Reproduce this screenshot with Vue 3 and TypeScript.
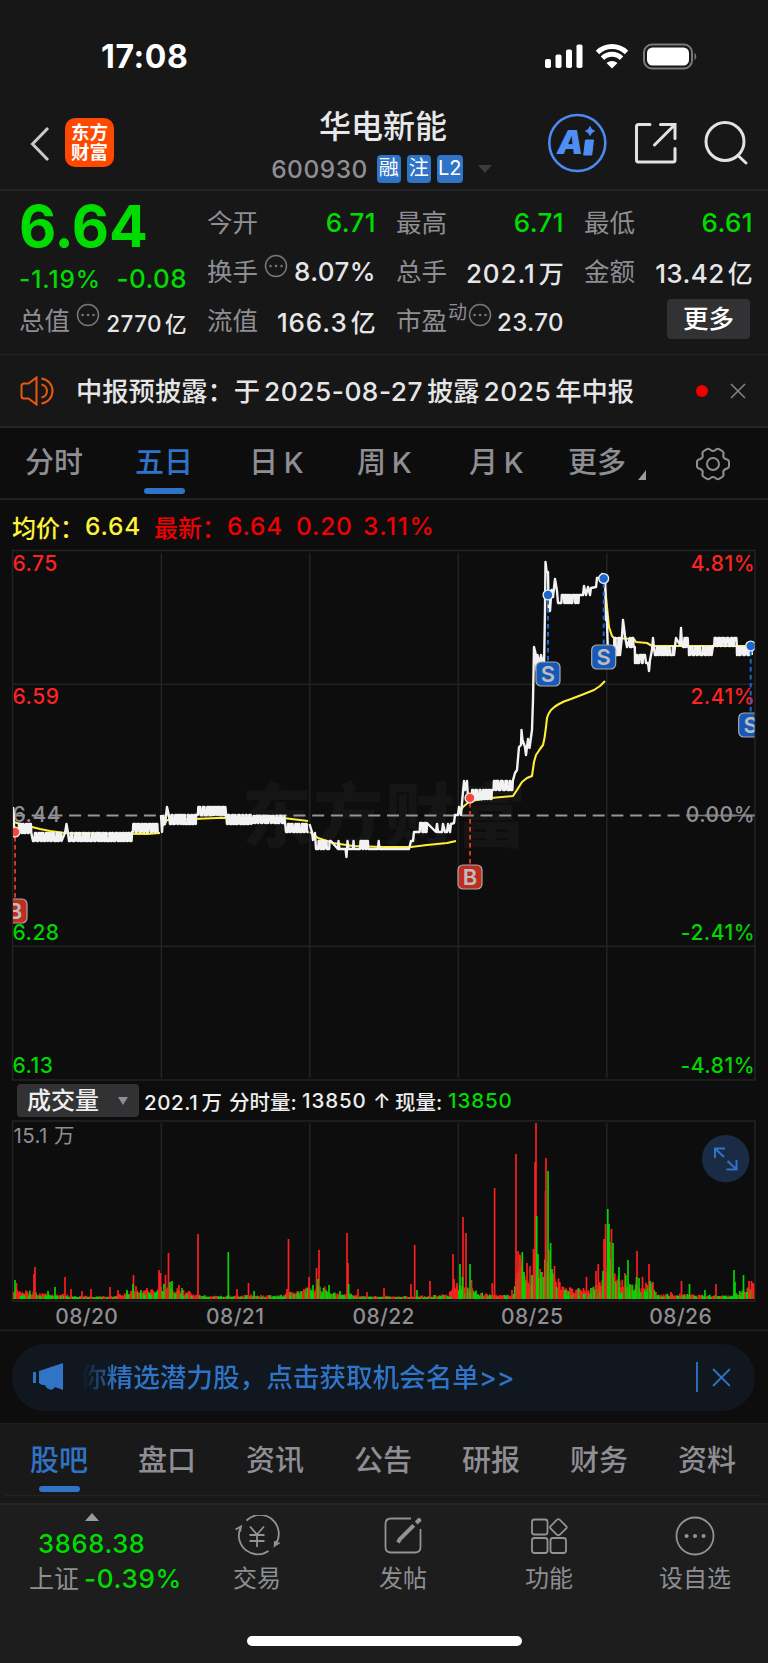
<script setup lang="ts">
interface Peak { x: number; h: number; up: boolean }

const UP = '#fb1f1f'
const DOWN = '#00d600'

const periods = ['分时', '五日', '日 K', '周 K', '月 K', '更多']
const sections = ['股吧', '盘口', '资讯', '公告', '研报', '财务', '资料']
const days = ['08/20', '08/21', '08/22', '08/25', '08/26']
const gridX = [161.3, 309.8, 458.3, 606.8]

let seed = 7
function rnd(): number {
  seed = (seed * 16807) % 2147483647
  return seed / 2147483647
}

/* [x0, x1, high, low, share of time at the low side] */
type Zone = [number, number, number, number, number]
function zigzag([x0, x1, top, bottom, bias]: Zone): string {
  let out = ''
  let x = x0
  let low = true
  while (x < x1) {
    out += ` ${x.toFixed(1)},${low ? bottom : top}`
    x += low ? 0.6 + rnd() * 2.8 * bias : 0.6 + rnd() * 2.8 * (1 - bias)
    if (x < x1) out += ` ${x.toFixed(1)},${low ? bottom : top}`
    x += 0.4
    low = !low
  }
  return out
}

const price = [
  '13,807 14,826 16,834' + zigzag([18, 32, 824, 833, 0.5]) + zigzag([33, 62, 833, 841, 0.6]) +
    ' 65,833 66.5,824 68,833' + zigzag([69, 132, 833, 841, 0.6]) + zigzag([132, 159, 824, 832, 0.5]),
  '161,815 162,832 163,816 165,824 167,807 169,816' + zigzag([170, 196, 815, 824, 0.6]) +
    zigzag([196, 227, 807, 815, 0.5]) + zigzag([227, 252, 815, 824, 0.5]) +
    zigzag([252, 286, 816, 823, 0.5]) + zigzag([286, 309, 824, 832, 0.5]),
  '309.5,824 312,832 313,840 315,833 316,849' + zigzag([317, 331, 841, 849, 0.6]) +
    ' 338,849 338.5,841 339.5,849 345.5,849 346.5,857 347.5,841 348.5,849 353,849 353.5,841 354,849' +
    zigzag([358, 369, 841, 849, 0.6]) + ' 378,849 378.7,841 379.4,849 409,849 411,841 413,841 414,832 417,832' +
    zigzag([418, 427, 823, 832, 0.5]) +
    ' 436,832 437,824 438,832 442,832 443,824 445,832 447,832 448,824 450,832 451,824 454,823 455,815 458,815' +
    ' 459,807 461,815 462,803 464,781 465,790 467,781 468,798' + zigzag([470, 492, 790, 799, 0.6]) +
    zigzag([492, 514, 781, 790, 0.5]) +
    ' 515,773 517,770 519,747 521,745 521.5,730 522.5,740 525,747 526,755 528,739 529.5,748 532,730 533,700 534,647 535.5,653 536.5,670 537.5,655 540,665 541,655 544,668 545,610 545.5,562 546.5,571 548,572 548.7,611 550,611 551.5,590 553,597 555,579 557,591 558,603' +
    zigzag([560, 581, 595, 603, 0.4]) +
    ' 583,595 584,586 586,595 588,587 590,595 591,588 596,587 597,578 600,578 602,574 605,575 606,620 606.7,612 608,655 609.5,648',
  '609,648 612,654' + zigzag([613, 621, 638, 655, 0.5]) +
    ' 622,636 623,620 625,636 627,647 630,638' + zigzag([630, 635, 638, 647, 0.5]) +
    zigzag([635, 644, 655, 663, 0.5]) + ' 645,655 646,663 648,663 649,671 650,660 652,650 653,638 654,648' +
    zigzag([655, 675, 647, 655, 0.7]) + ' 676,638 680,645 681,628 682,645' +
    zigzag([683, 689, 638, 647, 0.4]) + zigzag([689, 713, 647, 655, 0.6]) +
    zigzag([713, 737, 638, 646, 0.4]) + zigzag([737, 752, 647, 655, 0.5]),
]

const average = [
  '13,807 14,822 20,824 32,827 40,829 50,831 65,833 100,833.5 147,834 160,833',
  '163,826 167,820 193,819 217,818 283,818 308,821',
  '310,832 318,838 333,843 353,846 383,847 411,847 427,845 447,843 456,841',
  '459,813 463,807 470,801 491,798 513,796 517,790 522,782 527,778 532,776 534,762 536,755 540,749 543,745 544.5,738 546,727 547,718 548.5,714 551,710 555,706.500 559,704 564,701.500 571,699 584,694 594,690 600,686 605,681',
  '605,587 607,607 609,627 612,636 614,638 634,639 636,642 647,643 652,646 755,646',
]

const trades = [
  { kind: 'B', x: 15, y: 832, tag: 911 }, { kind: 'B', x: 470, y: 798, tag: 877 },
  { kind: 'S', x: 548, y: 595, tag: 674 }, { kind: 'S', x: 603.7, y: 578.5, tag: 657 },
  { kind: 'S', x: 750.7, y: 646, tag: 725 },
]

/* typical volume level along the x axis */
const level: [number, number][] = [
  [13, 10], [30, 8], [50, 5], [60, 5], [80, 3], [115, 3], [130, 8], [160, 12], [175, 11], [195, 5], [210, 3],
  [250, 4], [280, 4], [300, 9], [320, 14], [335, 6], [350, 6], [360, 3], [420, 3], [448, 5], [458, 15],
  [472, 10], [480, 6], [495, 4], [513, 4], [515, 24], [520, 44], [525, 27], [531, 18], [536, 38], [540, 26],
  [546, 44], [552, 26], [560, 18], [572, 10], [590, 10], [600, 20], [606, 44], [612, 36], [620, 21], [628, 14],
  [640, 14], [652, 16], [657, 5], [680, 5], [700, 4], [730, 4], [740, 8], [755, 16],
]
function levelAt(x: number): number {
  for (let i = 1; i < level.length; i++) {
    const [x1, h1] = level[i]
    const [x0, h0] = level[i - 1]
    if (x <= x1) return h0 + ((h1 - h0) * (x - x0)) / (x1 - x0)
  }
  return 5
}

const peaks = ('15:19g 16.5:16r 35:32r 34:25r 48:8g 55:12g 65:22r 71:10r 82:8r 91:10r 110:12r 118:9r 127:9g 133.5:24r 133:15g 136:13r 147:11r ' +
  '159:29r 160.5:26r 164:15g 165.5:24r 168.5:46r 170:17g 172:18g 179:14r 182:11g 189:8r 198:65r 228.3:47g 237:10r 248.5:16r 254:8g 288.5:60r ' +
  '287:10r 304:10r 309:22r 313:14g 316.5:31r 319:49r 318:20g 329:14g 340:8g 347:66r 348:36r 348.6:15g 358:10r 367:7r 384:11r 411:15r ' +
  '414.7:54r 417:9g 430:18r 453:45r 454:20r 457:16r 460:35g 463:82r 462.5:22g 466:66r 470:35g 471.5:19r 492.3:16r 494.6:111r 512:9r ' +
  '516:145r 518:48r 520:43r 522.3:47g 524:27g 527:36r 530:33r 532:24g 533.5:50r 535:137r 536:176r 536.7:83g 538:45g 540:30r 541:27g ' +
  '546:141r 545.5:108r 548:128g 549:49r 550.6:56g 552:30g 554.5:33r 586.5:22r 596:28r 598.3:35r 603:28g 604:60r 605.6:75r 607.8:90g ' +
  '609:75g 609.7:57g 611.5:70r 613:56g 619:32g 625:26r 628:39g 625.8:24g 637:48r 636.5:22g 639:21g 642.5:22r 649:35r 650:18g 653:17r ' +
  '671:7r 681.5:18r 689.5:15g 705:9g 716:15r 734:29g 735:17g 743.5:24g 749:18r 751.5:18r 753:16r')
  .split(' ')
  .map<Peak>((token) => {
    const [x, rest] = token.split(':')
    return { x: Number(x), h: parseFloat(rest), up: rest.endsWith('r') }
  })

const bars: Peak[] = []
for (let x = 13.5; x < 754; x += 1.25) {
  const top = levelAt(x)
  bars.push({ x, h: Math.max(2, top * (0.5 + rnd() * 0.6)), up: rnd() > 0.3 })
}
for (let x = 14; x < 754; x += 1.6) {
  bars.push({ x, h: Math.max(1.5, levelAt(x) * (0.25 + rnd() * 0.5)), up: rnd() > 0.5 })
}
function barPath(up: boolean, list: Peak[]): string {
  return list.filter((b) => b.up === up).map((b) => `M${b.x.toFixed(1)} 1299v-${b.h.toFixed(1)}`).join('')
}
</script>

<template>
  <div class="screen">
    <header class="top">
      <div class="status">
        <span class="clock">17:08</span>
        <svg class="radio" width="160" height="30" viewBox="0 0 160 30">
          <g fill="#fff">
            <rect x="2" y="17" width="6" height="9" rx="1.8" /><rect x="12.5" y="12.500" width="6" height="13.500" rx="1.800" />
            <rect x="23" y="7.500" width="6" height="18.500" rx="1.800" /><rect x="33.500" y="2.500" width="6" height="23.500" rx="1.800" />
            <path d="M69 26.500l-5.500-5.500a8.300 8.300 0 0 1 11 0z" />
          </g>
          <path d="M54.500 10.500a20.800 20.800 0 0 1 29 0M59.500 16.200a13.700 13.700 0 0 1 19 0" fill="none" stroke="#fff" stroke-width="5" />
          <rect x="101" y="2.500" width="48" height="24" rx="8" fill="none" stroke="#7a7a7a" stroke-width="2" />
          <rect x="104" y="5.500" width="42" height="18" rx="5.500" fill="#fff" />
          <path d="M151.500 10.500q3.500 4 0 8z" fill="#7a7a7a" />
        </svg>
      </div>
      <div class="nav">
        <svg class="back" width="22" height="38" viewBox="0 0 22 38"><path d="M19 3L3.500 19L19 35" fill="none" stroke="#c9c9c9" stroke-width="3" /></svg>
        <div class="brand"><span>东方</span><span>财富</span></div>
        <div class="title">
          <h1>华电新能</h1>
          <div class="code"><span>600930</span><b>融</b><b>注</b><b class="lv">L2</b><i></i></div>
        </div>
        <svg class="tools" width="208" height="64" viewBox="0 0 208 64">
          <circle cx="31.300" cy="32" r="28" fill="none" stroke="#4a8af0" stroke-width="2.600" />
          <text x="11" y="42.500" class="ai">A</text>
          <path d="M39.500 29h8l-1.800 15h-8z" fill="#4f8ff5" stroke="#4f8ff5" stroke-linejoin="round" />
          <path d="M44 15.500q1 3.700 4.500 4.500q-3.500 1-4.500 4.500q-1-3.500-4.500-4.500q3.500-.8 4.500-4.500z" fill="#4f8ff5" stroke="#4f8ff5" />
          <g fill="none" stroke="#e2e2e2" stroke-width="3" stroke-linecap="round">
            <path d="M104 13.500H92.500q-2 0-2 2V49q0 2 2 2h34.500q2 0 2-2V37.500M114.500 13.500H129v14M129 13.500L108.500 34" />
            <circle cx="179" cy="30.500" r="19" /><path d="M192 44.500L200 52" />
          </g>
        </svg>
      </div>
    </header>

    <section class="quote">
      <div class="c0">
        <div class="last">6.64</div>
        <div class="change"><span>-1.19%</span><span class="diff">-0.08</span></div>
        <div class="cell"><label>总值</label><svg class="more" viewBox="0 0 24 24"><circle cx="12" cy="12" r="10.500" /><path d="M6.500 12h.1M12 12h.1M17.500 12h.1" /></svg><em class="small">2770<u>亿</u></em></div>
      </div>
      <div class="col">
        <div class="cell"><label>今开</label><em class="down">6.71</em></div>
        <div class="cell"><label>换手</label><svg class="more" viewBox="0 0 24 24"><circle cx="12" cy="12" r="10.500" /><path d="M6.500 12h.1M12 12h.1M17.500 12h.1" /></svg><em>8.07%</em></div>
        <div class="cell"><label>流值</label><em class="wide">166.3<u>亿</u></em></div>
      </div>
      <div class="col">
        <div class="cell"><label>最高</label><em class="down">6.71</em></div>
        <div class="cell"><label>总手</label><em class="wide">202.1<u>万</u></em></div>
        <div class="cell"><label>市盈</label><sup>动</sup><svg class="more tight" viewBox="0 0 24 24"><circle cx="12" cy="12" r="10.500" /><path d="M6.500 12h.1M12 12h.1M17.500 12h.1" /></svg><em class="pe">23.70</em></div>
      </div>
      <div class="col">
        <div class="cell"><label>最低</label><em class="down">6.61</em></div>
        <div class="cell"><label>金额</label><em>13.42<u>亿</u></em></div>
        <div class="cell end"><button>更多</button></div>
      </div>
    </section>

    <section class="notice">
      <svg width="36" height="30" viewBox="0 0 36 30" fill="none" stroke="#e8590c" stroke-width="2">
        <path d="M16.500 1.500v27l-8-6H4q-2.500 0-2.500-2.500V10Q1.500 7.500 4 7.500h4.500zM21.500 2.500a12.600 12.600 0 0 1 0 25M21.500 8.500a6.600 6.600 0 0 1 0 13" />
      </svg>
      <p>中报预披露：于<span class="num">2025-08-27</span>披露<span class="num">2025</span>年中报</p>
      <span class="dot"></span>
      <svg width="16" height="16" viewBox="0 0 16 16"><path d="M1 1l14 14M15 1L1 15" stroke="#858585" stroke-width="1.500" /></svg>
    </section>

    <nav class="periods">
      <span v-for="p in periods" :key="p" :class="{ on: p === '五日' }">{{ p }}</span>
      <svg class="caret" width="8" height="10" viewBox="0 0 8 10"><path d="M8 0v10H0z" fill="#9a9a9f" /></svg>
      <svg class="gear" width="36" height="36" viewBox="0 0 36 36" fill="none" stroke="#8e8e93" stroke-width="2">
        <path d="M11.500 3.300Q14 2 15.500 4q2.500 2 5 0q1.500-2 4-.7l3 1.900q1.800 1.500.8 3.500q-.6 3 2.300 4.300q3.400.8 3.400 2.800v4.400q0 2-3.400 2.800q-2.900 1.300-2.300 4.300q1 2-.8 3.500l-3 1.900q-2.500 1.300-4-.7q-2.500-2-5 0q-1.500 2-4 .7l-3-1.900q-1.800-1.500-.8-3.500q.6-3-2.300-4.300Q2 22.200 2 20.200v-4.400q0-2 3.400-2.800q2.900-1.300 2.300-4.300q-1-2 .8-3.500z" />
        <circle cx="18" cy="18" r="6" />
      </svg>
    </nav>

    <div class="legend"><span class="avg n0">均价：</span><span class="avg n1">6.64</span><span class="n0">最新：</span><span class="n2">6.64</span><span class="n3">0.20</span><span class="n4">3.11%</span></div>

    <svg class="chart" width="768" height="532" viewBox="0 549 768 532">
      <defs><clipPath id="plot"><rect x="13" y="551" width="741.500" height="529" /></clipPath></defs>
      <text x="384" y="842" class="mark" textLength="284">东方财富</text>
      <g stroke="#232325" stroke-width="1.500" fill="none">
        <rect x="12.500" y="550.500" width="742.500" height="529.500" />
        <path d="M12.500 684.300H755M12.500 946.300H755" />
        <path v-for="x in gridX" :key="x" :d="`M${x} 553V1078`" />
      </g>
      <path d="M13 815.500H755" stroke="#96969a" stroke-width="2" stroke-dasharray="12 6.700" />
      <path d="M688 815.500H755" stroke="#77777b" stroke-width="1.500" />
      <g class="axis">
        <text x="12.500" y="571" fill="#f22">6.75</text><text x="12.500" y="703.500" fill="#f22">6.59</text>
        <text x="12.500" y="822" fill="#8e8e93">6.44</text><text x="12.500" y="940" fill="#00d600">6.28</text>
        <text x="12.500" y="1073" fill="#00d600">6.13</text>
        <g text-anchor="end">
          <text x="755" y="571" fill="#f22">4.81%</text><text x="755" y="703.500" fill="#f22">2.41%</text>
          <text x="755" y="822" fill="#8e8e93">0.00%</text><text x="755" y="940" fill="#00d600">-2.41%</text>
          <text x="755" y="1073" fill="#00d600">-4.81%</text>
        </g>
      </g>
      <g clip-path="url(#plot)">
        <polyline v-for="(p, i) in average" :key="'a' + i" :points="p" fill="none" stroke="#ffee35" stroke-width="2.100" stroke-linejoin="round" />
        <polyline v-for="(p, i) in price" :key="'p' + i" :points="p" fill="none" stroke="#f2f2f2" stroke-width="2.400" stroke-linejoin="round" />
        <g v-for="t in trades" :key="t.x" :class="['trade', t.kind]">
          <path :d="`M${t.x} ${t.y + 5}V${t.tag - 12}`" stroke-width="2" stroke-dasharray="4.500 3.500" />
          <circle :cx="t.x" :cy="t.y" r="4.900" />
          <rect :x="t.x - 12" :y="t.tag - 12" width="24" height="24" rx="5" />
          <text :x="t.x" :y="t.tag + 8">{{ t.kind }}</text>
        </g>
      </g>
    </svg>

    <div class="volbar">
      <button>成交量<i></i></button>
      <span>202.1<s></s>万</span><span class="v2">分时量:</span><span class="v3">13850</span><span class="v4">↑</span><span class="v5">现量:</span><span class="v6">13850</span>
    </div>

    <svg class="volume" width="768" height="211" viewBox="0 1120 768 211">
      <g stroke="#232325" stroke-width="1.500" fill="none">
        <rect x="12.500" y="1121" width="742.500" height="180" />
        <path v-for="x in gridX" :key="x" :d="`M${x} 1123V1299`" />
        <path d="M0 1330.300H768" />
      </g>
      <text x="13.500" y="1143" class="max">15.1 万</text>
      <g stroke-width="1.700">
        <path :d="barPath(true, bars)" :stroke="UP" /><path :d="barPath(false, bars)" :stroke="DOWN" />
        <path :d="barPath(true, peaks)" :stroke="UP" /><path :d="barPath(false, peaks)" :stroke="DOWN" />
      </g>
      <text v-for="(d, i) in days" :key="d" :x="86.700 + i * 148.500" y="1323.500" class="day">{{ d }}</text>
      <circle cx="725.700" cy="1158.700" r="23.700" fill="#1a2c45" />
      <path d="M715 1158V1148.500H725M715.500 1149L724 1157M736.500 1160V1169.500H726.500M736 1169L727.500 1161" fill="none" stroke="#2f74c6" stroke-width="2" />
    </svg>

    <div class="bannerbox">
      <div class="banner">
        <svg width="34" height="30" viewBox="0 0 34 30" fill="#2f74c6"><path d="M1 10h3v11H1zM7 9L31 1v27l-8-3q-2 3.500-5 2.500q-4-1-5-4.500H10L7 21z" /></svg>
        <p>你精选潜力股，点击获取机会名单&gt;&gt;</p>
        <svg width="34" height="32" viewBox="0 0 34 32" fill="none" stroke="#2f74c6" stroke-width="1.800"><path d="M1 1V31M17 8l17 17M34 8L17 25" /></svg>
      </div>
    </div>

    <nav class="sections"><span v-for="s in sections" :key="s" :class="{ on: s === '股吧' }">{{ s }}</span></nav>

    <footer class="dock">
      <div class="index">
        <i></i><div class="points">3868.38</div><div class="move"><span>上证</span>-0.39%</div>
      </div>
      <div class="action">
        <svg viewBox="0 0 48 42"><path d="M13.500 5.500A18.900 18.900 0 0 1 42.500 29.500l-.8 1l.2-4.500M41 31l5.500-3.200M35.500 36A18.900 18.900 0 0 1 7 14l.700-2.500M2.500 14.500L8 11.500l-.8 5M17 11.500l7 8l7-8M24 20v12M16.500 20h15M16.500 26h15" /></svg><span>交易</span>
      </div>
      <div class="action">
        <svg viewBox="0 0 48 42"><path d="M32 3.500H12q-5.500 0-5.500 5.500V32q0 5.500 5.500 5.500h24q5.500 0 5.500-5.500V14" /><path d="M34.800 10.300L21 24L19 27.500" stroke-width="4" /><path d="M37.200 8L40 5.200" stroke-width="4" /><path d="M40 5.200v0" stroke-width="4.500" stroke-linecap="round" /></svg><span>发帖</span>
      </div>
      <div class="action">
        <svg viewBox="0 0 48 42"><rect x="7" y="4.500" width="15.500" height="15" rx="2.500" /><rect x="7" y="23" width="15.500" height="15" rx="2.500" /><rect x="25.500" y="23" width="15.500" height="15" rx="2.500" /><path d="M32 4.600q1.300-1 2.600 0l6.700 6.700q1 1 0 2l-6.700 6.500q-1.300 1-2.600 0l-6.500-6.500q-1-1 0-2z" /></svg><span>功能</span>
      </div>
      <div class="action">
        <svg viewBox="0 0 48 42"><circle cx="24" cy="21" r="18.500" /><path d="M15.500 21h.1M24 21h.1M32.500 21h.1" stroke-width="4" stroke-linecap="round" /></svg><span>设自选</span>
      </div>
      <div class="home"></div>
    </footer>
  </div>
</template>

<style>
body { background: #0d0d0d; }
</style>

<style scoped>
.screen, .screen * { box-sizing: border-box; }
.screen { width: 768px; height: 1663px; overflow: hidden; background: #0d0d0d; color: #e6e6e8; font-family: Inter, "Noto Sans CJK SC", sans-serif; display: flex; flex-direction: column; white-space: nowrap; }
.screen > * { flex: none; }
svg { display: block; flex: none; }
.top { height: 191px; background: #171717; border-bottom: 2px solid #242426; }
.status { height: 98px; display: flex; justify-content: space-between; padding: 42px 65px 0 101px; }
.clock { font-weight: 700; font-size: 32px; line-height: 30px; color: #fff; letter-spacing: 0.600px; }
.nav { height: 91px; display: flex; align-items: flex-start; }
.back { margin: 27px 0 0 29px; }
.brand { margin: 20px 0 0 14px; width: 49px; height: 49px; border-radius: 10px; background: #ff4800; color: #fff; display: flex; flex-direction: column; align-items: center; justify-content: center; font-size: 18.500px; line-height: 20.500px; font-weight: 700; padding-bottom: 1px; }
.title { width: 380px; margin-left: 79px; display: flex; flex-direction: column; align-items: center; }
h1 { margin: 10px 0 0; font-size: 32px; line-height: 38px; font-weight: 500; color: #e8e8ea; }
.code { display: flex; align-items: center; height: 28px; margin: 9px 3px 0 0; }
.code span { font-size: 24.500px; color: #8e8e93; letter-spacing: 0.500px; margin-right: 9px; font-weight: 500; }
.code b { width: 24px; height: 28px; border-radius: 4px; background: #2f74c6; color: #fff; font-size: 20px; font-weight: 400; line-height: 27px; text-align: center; margin-right: 6px; }
.code .lv { width: 26px; margin-right: 15px; }
.code i { border: 7px solid transparent; border-top: 8px solid #3c3c3e; border-bottom: 0; }
.tools { margin: 13px 0 0 -27px; }
.ai { font: italic 900 33px Inter, sans-serif; fill: #4f8ff5; }

.quote { height: 164px; background: #171717; border-bottom: 1.500px solid #242426; display: grid; grid-template-columns: 168px 169px 168px 169px; column-gap: 20px; padding: 0 15px 0 19px; }
.c0 { display: flex; flex-direction: column; }
.last { color: #00dc00; font-weight: 700; font-size: 57.500px; line-height: 70px; letter-spacing: -0.200px; }
.change { height: 35px; display: flex; justify-content: space-between; align-items: center; color: #00dc00; font-size: 24.500px; font-weight: 500; letter-spacing: 0.900px; }
.change .diff { font-size: 26px; letter-spacing: 0.400px; }
.col { display: flex; flex-direction: column; padding-top: 7px; }
.cell { height: 49px; display: flex; align-items: center; }
label, sup { color: #8e8e93; font-size: 25.500px; line-height: 49px; }
em { font-style: normal; font-weight: 500; font-size: 26px; margin-left: auto; letter-spacing: 0.400px; }
em.wide { letter-spacing: 0.900px; margin-right: -0.500px; }
em.small { font-size: 22.500px; padding-top: 3px; }
em.pe { font-size: 24px; padding-top: 3px; }
u { text-decoration: none; margin-left: 3px; font-size: 0.960em; }
.down { color: #00dc00; }
sup { font-size: 19px; line-height: 20px; margin: -16px 1px 0 1px; }
.more { width: 24px; height: 24px; margin: -11px 0 0 6px; fill: none; stroke: #77777b; stroke-width: 1.500; }
.more path { stroke-width: 2.500; stroke-linecap: round; }
.tight { margin-left: 0; }
.end { justify-content: flex-end; }
.quote button { width: 83px; height: 40px; margin: -4px 3px 0 0; border: 0; border-radius: 4px; background: #323234; color: #fff; font: 500 25.500px/38px Inter, "Noto Sans CJK SC", sans-serif; padding: 0; }

.notice { height: 73px; background: #171717; border-bottom: 2px solid #252527; display: flex; align-items: center; padding: 0 22px 0 20px; }
.notice p { margin: -2px 0 0 20px; font-size: 26.300px; font-weight: 500; width: 620px; }
.num { letter-spacing: 0.500px; margin: 0 4px; }
.volbar s { display: inline-block; width: 3px; }
.dot { width: 12px; height: 12px; border-radius: 50%; background: #f00000; margin-right: 22px; }

.periods { height: 72px; border-bottom: 2px solid #202022; display: grid; grid-template-columns: 110px 114px 108px 112px 99px 70px 8px 1fr; color: #8e8e93; font-size: 29px; font-weight: 500; line-height: 70px; padding: 0 37px 0 25px; word-spacing: -2px; }
.periods span { position: relative; justify-self: start; height: 70px; }
.periods .on, .sections .on { color: #2f74c6; }
.on::after { content: ""; position: absolute; left: 50%; bottom: 4px; width: 41px; height: 6.500px; margin-left: -20.500px; border-radius: 3px; background: #2f74c6; }
.caret { margin-top: 42px; }
.gear { margin-top: 18px; justify-self: end; }

.legend { height: 49px; display: flex; align-items: center; padding: 3px 0 0 12px; font-size: 24.500px; font-weight: 500; color: #f00000; letter-spacing: 0.800px; }
.avg { color: #fff23a; }
.n0 { font-size: 24px; width: 73px; letter-spacing: 0; }
.n1 { width: 69px; }
.n2 { width: 69px; } .n3 { width: 67px; } .n4 { letter-spacing: 1.500px; }

.mark { font: 900 70px "Noto Sans CJK SC", sans-serif; fill: #151515; text-anchor: middle; }
.axis { font-size: 21px; font-weight: 500; letter-spacing: 0.500px; }
.trade text { font-size: 22px; font-weight: 600; text-anchor: middle; fill: #bcbcbe; }
.trade rect { stroke: #aaa; stroke-width: 1.200; }
.trade circle { stroke: #eee; stroke-width: 1.400; }
.B path { stroke: #d83424; } .B rect { fill: #bf2d20; } .B circle { fill: #f5483a; }
.S path { stroke: #1c66cf; } .S rect { fill: #1759b8; } .S circle { fill: #1c66cf; }

.volbar { height: 39px; display: flex; align-items: center; padding-left: 17px; font-size: 20.500px; font-weight: 500; color: #eee; }
.volbar button { width: 122px; height: 33px; border: 0; border-radius: 4px; background: #323234; color: #eee; font: 500 24px/31px Inter, "Noto Sans CJK SC", sans-serif; padding: 0 11px 0 10px; display: flex; align-items: center; justify-content: space-between; margin-right: 5px; }
.volbar i { border: 5px solid transparent; border-top: 8px solid #8e8e93; border-bottom: 0; }
.volbar span { width: 85px; letter-spacing: 0.600px; }
.volbar .v2 { width: 73px; letter-spacing: 0; } .volbar .v3 { width: 71px; letter-spacing: 0.900px; } .volbar .v4 { width: 22px; } .volbar .v5 { width: 53px; letter-spacing: 0; } .volbar .v6 { color: #00dc00; letter-spacing: 0.900px; }
.max { font-size: 20.500px; fill: #8e8e93; letter-spacing: 0.400px; }
.day { font-size: 21px; fill: #8e8e93; text-anchor: middle; letter-spacing: 0.400px; font-weight: 500; }

.bannerbox { height: 93px; padding: 12.500px 13px 0 12px; border-bottom: 1px solid #202022; }
.banner { height: 67px; border-radius: 33px; background: #10171f; display: flex; align-items: center; padding: 0 25px 0 20px; }
.banner p { margin: -3px 0 0 14px; flex: 1; font-size: 26.600px; font-weight: 500; color: #2f74c6; -webkit-mask-image: linear-gradient(90deg, transparent 2px, #000 36px); mask-image: linear-gradient(90deg, transparent 2px, #000 36px); }

.sections { height: 81px; background: #19191a; display: flex; padding: 0 6px 0 5px; color: #8e8e93; font-size: 29px; font-weight: 500; line-height: 74px; border-bottom: 2px solid #252527; }
.sections span { width: 108px; height: 72px; text-align: center; position: relative; border-bottom: 1px solid #232325; }
.sections .on::after { bottom: 3px; }

.dock { flex: 1 0 auto !important; background: #1d1d1e; display: grid; grid-template-columns: 184px 146px 146px 146px 146px; grid-template-rows: 131px 1fr; color: #8e8e93; }
.index { display: flex; flex-direction: column; padding-left: 29px; font-weight: 500; }
.index i { width: 0; margin: 8px 0 0 56px; border: 7px solid transparent; border-bottom: 8px solid #9a9a9f; border-top: 0; }
.points { color: #00dc00; font-size: 25.500px; line-height: 30px; margin: 8px 0 0 9px; letter-spacing: 0.700px; }
.move { color: #00dc00; font-size: 26px; line-height: 36px; display: flex; letter-spacing: 0.700px; margin-top: 2px; }
.move span { color: #8e8e93; font-size: 25px; font-weight: 400; margin-right: 5px; letter-spacing: 0; }
.action { display: flex; flex-direction: column; align-items: center; padding-top: 10px; }
.action svg { width: 48px; height: 42px; fill: none; stroke: #929297; stroke-width: 1.800; }
.action span { font-size: 24px; line-height: 32px; margin-top: 6px; }
.home { grid-column: 1 / -1; width: 275px; height: 10px; border-radius: 5px; background: #fff; margin-left: 247px; }
</style>
